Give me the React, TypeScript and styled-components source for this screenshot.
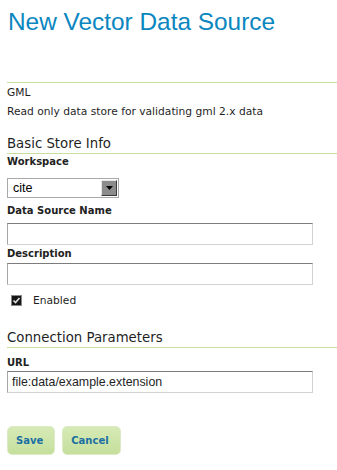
import styled, { createGlobalStyle } from "styled-components";

const GlobalStyle = createGlobalStyle`
  html, body {
    margin: 0;
    padding: 0;
    background: #ffffff;
  }
  body {
    font-family: "DejaVu Sans", Verdana, sans-serif;
    color: #1f1f1f;
  }
`;

const Page = styled.div`
  width: 337px;
  box-sizing: border-box;
  padding: 8px 0 0 7px;
`;

const Title = styled.h1`
  margin: 0 0 46px 1px;
  font-family: "Liberation Sans", Arial, sans-serif;
  font-weight: normal;
  font-size: 24.4px;
  line-height: 28px;
  color: #0a86c0;
  white-space: nowrap;
`;

const Info = styled.div`
  border-top: 1px solid #c6df9f;
  padding-top: 2px;
  display: flex;
  flex-direction: column;
  gap: 3px;
`;

const Text = styled.p`
  margin: 0;
  font-size: 10.7px;
  line-height: 16px;
`;

const SectionTitle = styled.h2<{ $top: number }>`
  margin: ${(p) => p.$top}px 0 0;
  padding-bottom: 1px;
  border-bottom: 1px solid #c6df9f;
  font-size: 13.3px;
  font-weight: normal;
  line-height: 17px;
  color: #1f1f1f;
`;

const Field = styled.div<{ $top: number; $gap: number }>`
  display: flex;
  flex-direction: column;
  align-items: flex-start;
  margin-top: ${(p) => p.$top}px;
  gap: ${(p) => p.$gap}px;
`;

const Label = styled.label`
  font-size: 10px;
  font-weight: bold;
  line-height: 14px;
  color: #222;
`;

const Select = styled.div`
  box-sizing: border-box;
  width: 112px;
  height: 20px;
  border: 1px solid #a9a9a9;
  background: #fff;
  display: flex;
  align-items: center;
  justify-content: space-between;
  padding: 0 1px 0 5px;
  font-family: "Liberation Sans", Arial, sans-serif;
  font-size: 12.5px;
  color: #000;
`;

const SelectButton = styled.span`
  box-sizing: border-box;
  width: 16px;
  height: 16px;
  background: #8c8c8c;
  border-top: 1px solid #e6e6e6;
  border-left: 1px solid #e6e6e6;
  border-right: 1px solid #3a3a3a;
  border-bottom: 1px solid #3a3a3a;
  display: flex;
  align-items: center;
  justify-content: center;
`;

const TextInput = styled.div`
  box-sizing: border-box;
  width: 306px;
  height: 22px;
  border-top: 1px solid #7c7c7c;
  border-left: 1px solid #a6a6a6;
  border-right: 1px solid #d2d2d2;
  border-bottom: 1px solid #d2d2d2;
  background: #fff;
  padding: 0 4px;
  display: flex;
  align-items: center;
  font-family: "Liberation Sans", Arial, sans-serif;
  font-size: 12.4px;
  color: #1f1f1f;
`;

const CheckRow = styled.div`
  display: flex;
  align-items: center;
  gap: 11px;
  height: 14px;
  margin-top: 8px;
  padding-left: 4px;
  font-size: 10.7px;
`;

const CheckBox = styled.span`
  box-sizing: border-box;
  width: 11px;
  height: 11px;
  border: 1px solid #8a8a8a;
  background: #161616;
  display: flex;
  align-items: center;
  justify-content: center;
`;

const Buttons = styled.div`
  display: flex;
  gap: 7px;
  margin-top: 33px;
`;

const Button = styled.button`
  box-sizing: border-box;
  height: 29px;
  padding: 0 11px 0 8px;
  border: 1px solid #dcebc6;
  border-radius: 5px;
  background: linear-gradient(#d6eab6, #c5df9c);
  font-family: "DejaVu Sans", Verdana, sans-serif;
  font-size: 10px;
  font-weight: bold;
  color: #1b6fa3;
  cursor: pointer;
`;

export default function App() {
  return (
    <>
      <GlobalStyle />
      <Page>
        <Title>New Vector Data Source</Title>
        <Info>
          <Text>GML</Text>
          <Text>Read only data store for validating gml 2.x data</Text>
        </Info>

        <SectionTitle $top={15}>Basic Store Info</SectionTitle>
        <Field $top={1} $gap={9}>
          <Label>Workspace</Label>
          <Select>
            <span>cite</span>
            <SelectButton>
              <svg width="7" height="4" viewBox="0 0 7 4">
                <path d="M0 0h7L3.5 4z" fill="#000" />
              </svg>
            </SelectButton>
          </Select>
        </Field>
        <Field $top={6} $gap={5}>
          <Label>Data Source Name</Label>
          <TextInput />
        </Field>
        <Field $top={2} $gap={2}>
          <Label>Description</Label>
          <TextInput />
        </Field>
        <CheckRow>
          <CheckBox>
            <svg width="9" height="9" viewBox="0 0 9 9">
              <path d="M1.5 4.5l2 2 4-4.5" stroke="#e0e0e0" strokeWidth="1.6" fill="none" />
            </svg>
          </CheckBox>
          <span>Enabled</span>
        </CheckRow>

        <SectionTitle $top={22}>Connection Parameters</SectionTitle>
        <Field $top={8} $gap={1}>
          <Label>URL</Label>
          <TextInput>file:data/example.extension</TextInput>
        </Field>

        <Buttons>
          <Button>Save</Button>
          <Button>Cancel</Button>
        </Buttons>
      </Page>
    </>
  );
}
